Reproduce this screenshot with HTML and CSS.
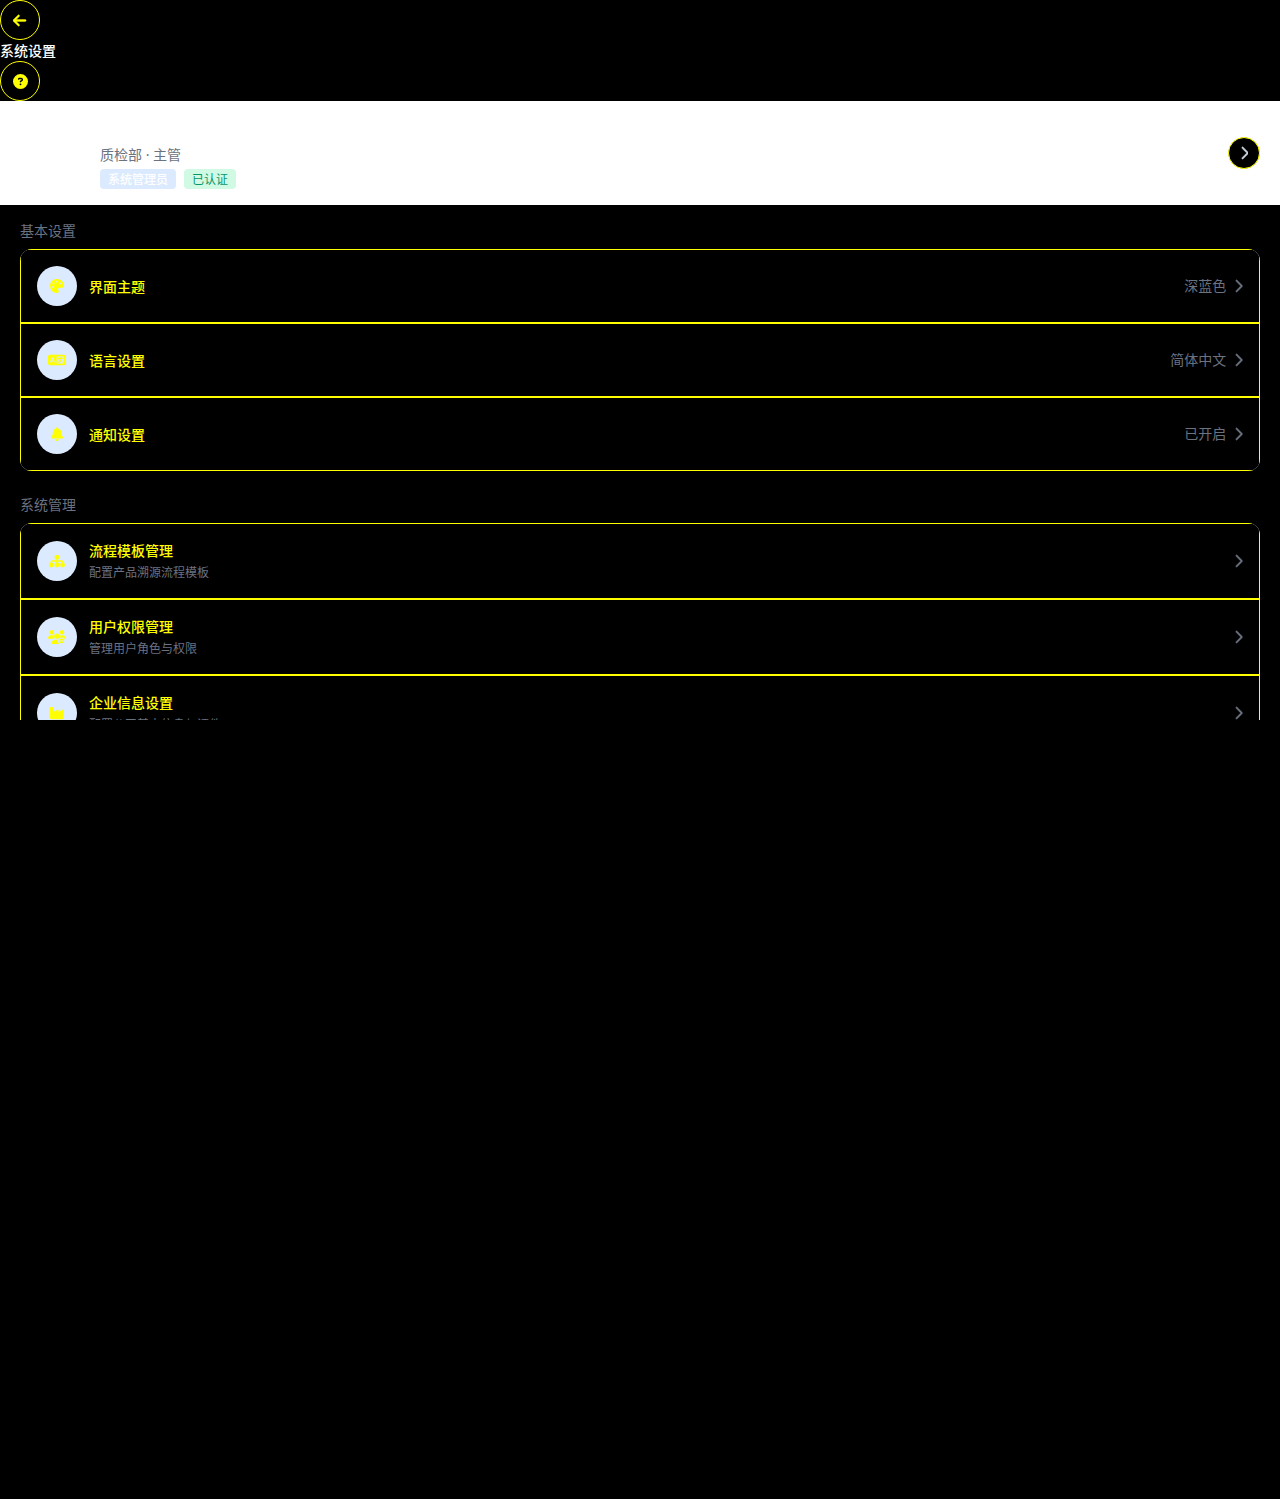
FILE: index.html
```html
<!DOCTYPE html>
<html lang="zh-CN">
<head>
<meta charset="utf-8">
<title>系统设置</title>
<link rel="stylesheet" href="styles.css">
</head>
<body>
<svg class="sprite" aria-hidden="true">
  <symbol id="chevron" viewBox="0 0 320 512"><path d="M310.6 233.4c12.5 12.5 12.5 32.8 0 45.3l-192 192c-12.5 12.5-32.8 12.5-45.3 0s-12.5-32.8 0-45.3L242.7 256 73.4 86.6c-12.5-12.5-12.5-32.8 0-45.3s32.8-12.5 45.3 0l192 192z"/></symbol>
</svg>
<div class="app">
  <header class="header">
    <button class="round"><svg class="arrow" width="13.125" height="15" viewBox="0 0 448 512"><path d="M9.4 233.4c-12.5 12.5-12.5 32.8 0 45.3l160 160c12.5 12.5 32.8 12.5 45.3 0s12.5-32.8 0-45.3L109.2 288 416 288c17.7 0 32-14.3 32-32s-14.3-32-32-32l-306.7 0L214.6 118.6c12.5-12.5 12.5-32.8 0-45.3s-32.8-12.5-45.3 0l-160 160z"/></svg></button>
    <div class="page-title">系统设置</div>
    <button class="round"><svg width="15" height="15" viewBox="0 0 512 512"><path d="M256 512A256 256 0 1 0 256 0a256 256 0 1 0 0 512zM169.8 165.3c7.9-22.3 29.1-37.3 52.8-37.3l58.3 0c34.9 0 63.1 28.3 63.1 63.1c0 22.6-12.1 43.5-31.7 54.8L280 264.4c-.2 13-10.9 23.6-24 23.6c-13.3 0-24-10.7-24-24l0-13.5c0-8.6 4.6-16.5 12.1-20.8l44.3-25.4c4.7-2.7 7.6-7.7 7.6-13.1c0-8.4-6.8-15.1-15.1-15.1l-58.3 0c-3.4 0-6.4 2.1-7.5 5.3l-.4 1.2c-4.4 12.5-18.2 19-30.6 14.6s-19-18.2-14.6-30.6l.4-1.2zM224 352a32 32 0 1 1 64 0 32 32 0 1 1 -64 0z"/></svg></button>
  </header>
  <section class="profile">
    <div class="profile-info">
      <div class="dept">质检部 · 主管</div>
      <div class="tags"><span class="tag role">系统管理员</span><span class="tag verified">已认证</span></div>
    </div>
    <button class="round small"><svg class="chev"><use href="#chevron"/></svg></button>
  </section>
  <main class="content">
    <h2 class="section-title">基本设置</h2>
    <div class="card">
      <div class="row">
        <span class="icon"><svg width="14" height="14" viewBox="0 0 512 512"><path d="M512 256c0 .9 0 1.8 0 2.7c-.4 36.5-33.6 61.3-70.1 61.3L344 320c-26.5 0-48 21.5-48 48c0 3.4 .4 6.7 1 9.900c2.100 10.200 6.500 20 10.800 29.900c6.100 13.800 12.100 27.500 12.100 42c0 31.800-21.600 60.700-53.400 62c-3.500 .1-7 .2-10.600 .2C114.600 512 0 397.400 0 256S114.600 0 256 0S512 114.600 512 256zM128 288a32 32 0 1 0 -64 0 32 32 0 1 0 64 0zm0-96a32 32 0 1 0 0-64 32 32 0 1 0 0 64zM288 96a32 32 0 1 0 -64 0 32 32 0 1 0 64 0zm96 96a32 32 0 1 0 0-64 32 32 0 1 0 0 64z"/></svg></span>
        <div class="label">界面主题</div><span class="value">深蓝色</span><svg class="chev"><use href="#chevron"/></svg>
      </div>
      <div class="row">
        <span class="icon"><svg width="17.5" height="14" viewBox="0 0 640 512"><path fill-rule="evenodd" d="M64 64H576a64 64 0 0 1 64 64V384a64 64 0 0 1-64 64H64a64 64 0 0 1-64-64V128a64 64 0 0 1 64-64zM320 128V384H576V128zM160 160c-8 0-15 5-18 12l-64 144c-9 20 25 40 37 16l9-20h72l9 20c12 24 46 4 37-16l-64-144c-3-7-10-12-18-12zm0 69l18 43h-36z"/><path d="M448 164v24M372 196h152M500 196c-14 64-52 116-116 144M400 248c28 44 64 72 112 92" fill="none" stroke="currentColor" stroke-width="40" stroke-linecap="round"/></svg></span>
        <div class="label">语言设置</div><span class="value">简体中文</span><svg class="chev"><use href="#chevron"/></svg>
      </div>
      <div class="row">
        <span class="icon"><svg width="12.25" height="14" viewBox="0 0 448 512"><path d="M224 0c-17.7 0-32 14.3-32 32l0 19.2C119 66 64 130.6 64 208l0 18.8c0 47-17.3 92.4-48.5 127.6l-7.4 8.3c-8.4 9.4-10.4 22.9-5.3 34.4S19.4 416 32 416l384 0c12.6 0 24-7.4 29.2-18.9s3.1-25-5.3-34.4l-7.4-8.3C401.3 319.2 384 273.9 384 226.8l0-18.8c0-77.4-55-142-128-156.8L256 32c0-17.7-14.3-32-32-32zm45.3 493.3c12-12 18.7-28.3 18.7-45.3l-64 0-64 0c0 17 6.7 33.3 18.7 45.3s28.3 18.7 45.3 18.7s33.3-6.7 45.3-18.7z"/></svg></span>
        <div class="label">通知设置</div><span class="value">已开启</span><svg class="chev"><use href="#chevron"/></svg>
      </div>
    </div>
    <h2 class="section-title">系统管理</h2>
    <div class="card">
      <div class="row tall">
        <span class="icon"><svg width="15.75" height="14" viewBox="0 0 576 512"><path d="M208 80c0-26.5 21.5-48 48-48l64 0c26.5 0 48 21.5 48 48l0 64c0 26.5-21.5 48-48 48l-8 0 0 40 152 0c30.9 0 56 25.1 56 56l0 32 8 0c26.5 0 48 21.5 48 48l0 64c0 26.5-21.5 48-48 48l-64 0c-26.5 0-48-21.5-48-48l0-64c0-26.5 21.5-48 48-48l8 0 0-32c0-4.4-3.6-8-8-8l-152 0 0 40 8 0c26.5 0 48 21.5 48 48l0 64c0 26.5-21.5 48-48 48l-64 0c-26.5 0-48-21.5-48-48l0-64c0-26.5 21.5-48 48-48l8 0 0-40-152 0c-4.4 0-8 3.6-8 8l0 32 8 0c26.5 0 48 21.5 48 48l0 64c0 26.5-21.5 48-48 48l-64 0c-26.5 0-48-21.5-48-48l0-64c0-26.5 21.5-48 48-48l8 0 0-32c0-30.9 25.1-56 56-56l152 0 0-40-8 0c-26.5 0-48-21.5-48-48l0-64z"/></svg></span>
        <div class="label">流程模板管理<p class="desc">配置产品溯源流程模板</p></div><svg class="chev"><use href="#chevron"/></svg>
      </div>
      <div class="row tall">
        <span class="icon"><svg width="17.5" height="14" viewBox="0 0 640 512"><path d="M144 160A80 80 0 1 0 144 0a80 80 0 1 0 0 160zM512 160A80 80 0 1 0 512 0a80 80 0 1 0 0 160zM0 298.7C0 310.4 9.6 320 21.3 320H235c-26.6-23.5-43.3-57.8-43.3-96c0-7.6.7-15 1.9-22.3c-13.6-6.3-28.7-9.7-44.6-9.7h-42.3C47.8 192 0 239.8 0 298.7zM320 320a96 96 0 1 0 0-192 96 96 0 1 0 0 192zM405 320H618.7c11.7 0 21.3-9.6 21.3-21.3C640 239.8 592 192 533 192h-43c-16 0-31 3.5-44.6 9.7c6 42-4 85-40.4 118.3zM261 352h120c-14 50-8 104 32 160H155c-15 0-27-12-27-27C128 412 188 352 261 352z"/><circle class="gear-gap" cx="496" cy="400" r="128"/><g fill="none" stroke="currentColor"><circle cx="496" cy="400" r="62" stroke-width="46"/><path d="M496 292v36M496 472v36M402 346l32 18M558 436l32 18M402 454l32-18M558 364l32-18" stroke-width="38"/></g></svg></span>
        <div class="label">用户权限管理<p class="desc">管理用户角色与权限</p></div><svg class="chev"><use href="#chevron"/></svg>
      </div>
      <div class="row tall">
        <span class="icon"><svg width="15.75" height="14" viewBox="0 0 576 512"><path d="M64 32C46.3 32 32 46.3 32 64V432c0 26.5 21.5 48 48 48H496c26.5 0 48-21.5 48-48V152.2c0-18.2-19.4-29.7-35.4-21.1L352 215.4V152.2c0-18.2-19.4-29.7-35.4-21.1L160 215.4V64c0-17.7-14.3-32-32-32H64z"/></svg></span>
        <div class="label">企业信息设置<p class="desc">配置公司基本信息与证件</p></div><svg class="chev"><use href="#chevron"/></svg>
      </div>
    </div>
  </main>
</div>
</body>
</html>
```
FILE: styles.css
```css
* { box-sizing: border-box; margin: 0; padding: 0; }
body { background: #000; color: #fff; font: 14px/21px "Noto Sans", "Noto Sans CJK SC", sans-serif; }
svg { display: block; fill: currentColor; flex: none; }
.sprite { position: absolute; width: 0; height: 0; }
.app { height: 720px; overflow: hidden; }
.page-title { font-weight: 500; }
.round { display: flex; align-items: center; justify-content: center; width: 40px; height: 40px; border: 1px solid #ff0; border-radius: 50%; background: #000; color: #ff0; }
.round.small { width: 32px; height: 32px; }
.arrow { stroke: currentColor; stroke-width: 14; }
.profile { height: 104px; padding: 16px 20px 16px 100px; background: #fff; display: flex; align-items: center; justify-content: space-between; }
.profile-info { align-self: flex-end; }
.dept { color: #6b7280; margin-bottom: 4px; }
.tags { display: flex; gap: 8px; }
.tag { height: 20px; padding: 0 8px; border-radius: 4px; font-size: 12px; line-height: 22px; }
.role { background: #dbeafe; color: #fff; font-weight: 500; }
.verified { background: #d1fae5; color: #059669; }
.content { padding: 16px 20px; }
.section-title { font-size: 14px; font-weight: 400; line-height: 20px; color: #6b7280; margin-bottom: 8px; }
.card { border-radius: 12px; overflow: hidden; background: #fff; margin-bottom: 24px; }
.row { height: 74px; padding: 0 16px; border: 1px solid #ff0; background: #000; display: flex; align-items: center; }
.row.tall { height: 76px; }
.icon { width: 40px; height: 40px; margin-right: 12px; border-radius: 50%; background: #dbeafe; color: #ff0; display: flex; align-items: center; justify-content: center; }
.gear-gap { fill: #dbeafe; }
.label { flex: 1; font-weight: 500; color: #ff0; }
.desc { font-size: 12px; font-weight: 400; line-height: 18px; margin-top: 3px; color: #6b7280; }
.value { color: #6b7280; margin-right: 8px; padding-bottom: 2px; }
.chev { width: 8.75px; height: 14px; color: #6b7280; stroke: currentColor; stroke-width: 14; }
.small .chev { color: #cbd5e1; }
```
